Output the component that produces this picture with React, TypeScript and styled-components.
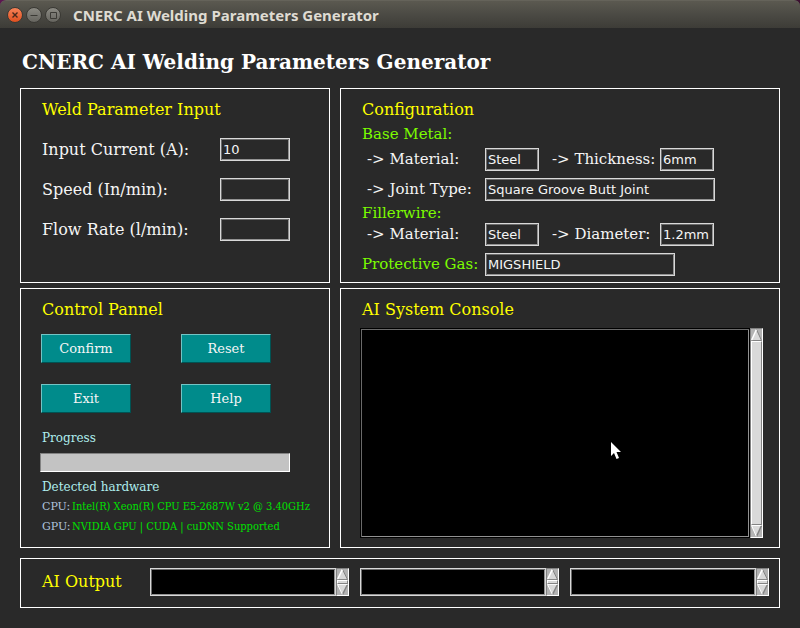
import React from "react";
import styled, { createGlobalStyle, css } from "styled-components";

const serif = `"DejaVu Serif", "Liberation Serif", serif`;
const sans = `"DejaVu Sans", "Liberation Sans", sans-serif`;

const GlobalStyle = createGlobalStyle`
  *, *::before, *::after { box-sizing: border-box; }
  body {
    margin: 0;
    background: #292929;
    color: #f5f5f5;
    font-family: ${serif};
  }
  button, input, textarea { margin: 0; border-radius: 0; outline: none; }
  h1, h2, h3, p { margin: 0; font-weight: normal; }
`;

const Window = styled.div`
  min-height: 100vh;
  background: #292929;
`;

const TitleBar = styled.header`
  display: flex;
  align-items: center;
  gap: 3px;
  height: 28px;
  padding: 0 7px;
  background: linear-gradient(#5b5950, #4b4a44 50%, #3d3c37);
  border-top: 1px solid #65635a;
  border-radius: 6px 6px 0 0;
`;

const Corner = styled.div`
  background: linear-gradient(90deg, #5c1750, #3b1030);
`;

const WindowButton = styled.button<{ $close?: boolean }>`
  display: grid;
  place-items: center;
  width: 16px;
  height: 16px;
  padding: 0;
  border: 1px solid #3a3934;
  border-radius: 50%;
  background: ${(p) =>
    p.$close ? "linear-gradient(#f68358, #e0501f)" : "linear-gradient(#8b8a83, #66655f)"};
`;

const WindowTitle = styled.span`
  margin-left: 9px;
  font: bold 15px/20px "Noto Sans", "Open Sans", sans-serif;
  color: #dfdbd2;
`;

const Main = styled.main`
  display: grid;
  grid-template-columns: 31fr 44fr;
  column-gap: 10px;
  padding: 0 20px 20px;
`;

const PageTitle = styled.h1`
  grid-column: 1 / -1;
  padding: 20px 2px 12px;
  font-size: 20px;
  line-height: 28px;
  font-weight: bold;
  color: #fff;
`;

const Panel = styled.section<{ $gap?: number }>`
  min-width: 0;
  margin-bottom: ${(p) => p.$gap ?? 0}px;
  padding: 11px 10px 6px 21px;
  border: 1px solid #fff;
`;

const PanelTitle = styled.h2`
  font-size: 16px;
  line-height: 20px;
  color: #ff0;
`;

const FieldList = styled.div`
  display: grid;
  gap: 17px;
  padding: 18px 0 34px;
`;

const Field = styled.div`
  display: grid;
  grid-template-columns: 178px 70px;
  align-items: center;
`;

const FieldLabel = styled.label`
  font-size: 16px;
  line-height: 23px;
`;

const entry = css`
  min-width: 0;
  border: 1px solid #d9d9d9;
  box-shadow: inset 1px 1px #6a6a6a, inset -1px -1px #929292;
  color: #f5f5f5;
  font-family: ${sans};
`;

const Entry = styled.input<{ $width: number }>`
  ${entry}
  width: ${(p) => p.$width}px;
  height: 23px;
  padding: 0 2px 1px;
  background: #292929;
  font-size: 13px;
`;

const ConfigBody = styled.div`
  display: flex;
  flex-direction: column;
  padding-top: 4px;
`;

const Subheading = styled.h3`
  font-size: 15px;
  line-height: 20px;
  color: #7cfc00;
`;

const ConfigRow = styled.div<{ $before: number; $after: number }>`
  display: flex;
  align-items: center;
  padding: ${(p) => p.$before}px 0 ${(p) => p.$after}px;
`;

const ConfigLabel = styled.label<{ $kind?: "second" | "top" }>`
  flex: none;
  width: ${(p) => (p.$kind === "second" ? 121 : 123)}px;
  padding-bottom: 2px;
  padding-left: ${(p) => (p.$kind === "second" ? 13 : p.$kind === "top" ? 0 : 5)}px;
  font-size: 15px;
  line-height: 20px;
  white-space: nowrap;
  color: ${(p) => (p.$kind === "top" ? "#7cfc00" : "#f5f5f5")};
`;

const ButtonGrid = styled.div`
  display: grid;
  grid-template-columns: 90px 90px;
  gap: 21px 50px;
  margin: 14px 0 15px -1px;
`;

const ActionButton = styled.button`
  height: 29px;
  padding: 0 0 1px;
  border: 1px solid;
  border-color: #74c4c4 #005353 #005353 #74c4c4;
  background: #008b8b;
  color: #f5f5f5;
  font-family: ${serif};
  font-size: 13px;
`;

const StatusLabel = styled.h3`
  font-size: 12px;
  line-height: 20px;
  color: #afeeee;
`;

const ProgressTrack = styled.div`
  width: 250px;
  height: 19px;
  margin: 5px 0 5px -2px;
  border: 1px solid;
  border-color: #828282 #fff #fff #828282;
  background: #c3c3c3;
`;

const Hardware = styled.dl`
  display: grid;
  grid-template-columns: 30px 1fr;
  margin: 0 -9px 4px 0;
  font-size: 11px;
  line-height: 20px;
  white-space: nowrap;
`;

const HardwareName = styled.dt`
  color: #b0c4de;
`;

const HardwareValue = styled.dd`
  margin: 0;
  font-family: "DejaVu Serif Condensed", ${serif};
  color: #00e000;
`;

const ConsoleArea = styled.div`
  position: relative;
  display: flex;
  height: 210px;
  margin: 8px 6px 0 -2px;
`;

const Output = styled.div`
  display: flex;
  min-width: 0;
  height: 28px;
`;

const TextBox = styled.textarea<{ $console?: boolean }>`
  ${entry}
  flex: 1;
  height: 100%;
  padding: 2px;
  border-color: ${(p) => (p.$console ? "#000" : "#d9d9d9")};
  background: #000;
  font-size: 13px;
  resize: none;
  overflow: hidden;
`;

const OutputPanel = styled(Panel)`
  grid-column: 1 / -1;
  display: grid;
  grid-template-columns: 97px repeat(3, 1fr);
  column-gap: 11px;
  align-items: center;
  padding: 9px 10px 11px 21px;
`;

const Track = styled.div`
  flex: none;
  display: flex;
  flex-direction: column;
  width: 13px;
  border: 1px solid;
  border-color: #828282 #fff #fff #828282;
  background: #b3b3b3;
`;

const Arrow = styled.button`
  display: block;
  flex: 0 1 12px;
  min-height: 0;
  padding: 0;
  border: 0;
  background: none;
  svg { display: block; width: 100%; height: 100%; }
`;

const Thumb = styled.div`
  flex: 1 0 4px;
  border: 1px solid;
  border-color: #fff #828282 #828282 #fff;
  background: #d9d9d9;
`;

const Pointer = styled.svg`
  position: absolute;
  left: 62%;
  top: 113px;
  width: 12px;
  height: 19px;
`;

function ScrollBar() {
  return (
    <Track>
      <Arrow type="button" aria-label="Scroll up">
        <svg viewBox="0 0 11 12" preserveAspectRatio="none">
          <path d="M5.5 .5 10.5 11.5H.5Z" fill="#d9d9d9" />
          <path d="M5.5 .5 10.5 11.5H.5" fill="none" stroke="#828282" />
          <path d="M.7 11 5.3 .7" stroke="#fff" strokeWidth="1.5" />
        </svg>
      </Arrow>
      <Thumb />
      <Arrow type="button" aria-label="Scroll down">
        <svg viewBox="0 0 11 12" preserveAspectRatio="none">
          <path d="M.5 .5H10.5L5.5 11.5Z" fill="#d9d9d9" />
          <path d="M10.5 .5 5.5 11.5" stroke="#828282" strokeWidth="1.5" />
          <path d="M10.5 .5H.5L5.3 11.3" fill="none" stroke="#fff" />
        </svg>
      </Arrow>
    </Track>
  );
}

type EntryProps = { id: string; label: string; value: string; width: number; kind?: "second" | "top" };

function ConfigEntry({ id, label, value, width, kind }: EntryProps) {
  return (
    <>
      <ConfigLabel htmlFor={id} $kind={kind}>{label}</ConfigLabel>
      <Entry id={id} defaultValue={value} $width={width} />
    </>
  );
}

const parameters = [
  { id: "current", label: "Input Current (A):", value: "10" },
  { id: "speed", label: "Speed (In/min):", value: "" },
  { id: "flow", label: "Flow Rate (l/min):", value: "" },
];

export default function App() {
  return (
    <Window>
      <GlobalStyle />
      <Corner>
        <TitleBar>
          <WindowButton type="button" aria-label="Close" $close>
            <svg width="8" height="8" viewBox="0 0 8 8">
              <path d="M1.5 1.5 6.5 6.5M6.5 1.5 1.5 6.5" stroke="#47291c" strokeWidth="1.4" />
            </svg>
          </WindowButton>
          <WindowButton type="button" aria-label="Minimize">
            <svg width="8" height="8" viewBox="0 0 8 8">
              <path d="M.5 4.5H7.5" stroke="#3b3a35" />
            </svg>
          </WindowButton>
          <WindowButton type="button" aria-label="Maximize">
            <svg width="8" height="8" viewBox="0 0 8 8">
              <path d="M1.5 1.5H7.5V7.5H1.5Z" fill="none" stroke="#3b3a35" />
            </svg>
          </WindowButton>
          <WindowTitle>CNERC AI Welding Parameters Generator</WindowTitle>
        </TitleBar>
      </Corner>

      <Main>
        <PageTitle>CNERC AI Welding Parameters Generator</PageTitle>

        <Panel $gap={5}>
          <PanelTitle>Weld Parameter Input</PanelTitle>
          <FieldList>
            {parameters.map((p) => (
              <Field key={p.id}>
                <FieldLabel htmlFor={p.id}>{p.label}</FieldLabel>
                <Entry id={p.id} defaultValue={p.value} $width={70} />
              </Field>
            ))}
          </FieldList>
        </Panel>

        <Panel $gap={5}>
          <PanelTitle>Configuration</PanelTitle>
          <ConfigBody>
            <Subheading>Base Metal:</Subheading>
            <ConfigRow $before={4} $after={7}>
              <ConfigEntry id="base" label="-> Material:" value="Steel" width={54} />
              <ConfigEntry id="thickness" label="-> Thickness:" value="6mm" width={54} kind="second" />
            </ConfigRow>
            <ConfigRow $before={0} $after={2}>
              <ConfigEntry id="joint" label="-> Joint Type:" value="Square Groove Butt Joint" width={230} />
            </ConfigRow>
            <Subheading>Fillerwire:</Subheading>
            <ConfigRow $before={0} $after={7}>
              <ConfigEntry id="filler" label="-> Material:" value="Steel" width={54} />
              <ConfigEntry id="diameter" label="-> Diameter:" value="1.2mm" width={54} kind="second" />
            </ConfigRow>
            <ConfigRow $before={0} $after={0}>
              <ConfigEntry id="gas" label="Protective Gas:" value="MIGSHIELD" width={190} kind="top" />
            </ConfigRow>
          </ConfigBody>
        </Panel>

        <Panel $gap={10}>
          <PanelTitle>Control Pannel</PanelTitle>
          <ButtonGrid>
            {["Confirm", "Reset", "Exit", "Help"].map((name) => (
              <ActionButton type="button" key={name}>{name}</ActionButton>
            ))}
          </ButtonGrid>
          <StatusLabel id="progress">Progress</StatusLabel>
          <ProgressTrack role="progressbar" aria-labelledby="progress" aria-valuenow={0} />
          <StatusLabel>Detected hardware</StatusLabel>
          <Hardware>
            <HardwareName>CPU:</HardwareName>
            <HardwareValue>Intel(R) Xeon(R) CPU E5-2687W v2 @ 3.40GHz</HardwareValue>
            <HardwareName>GPU:</HardwareName>
            <HardwareValue>NVIDIA GPU | CUDA | cuDNN Supported</HardwareValue>
          </Hardware>
        </Panel>

        <Panel $gap={10}>
          <PanelTitle id="console">AI System Console</PanelTitle>
          <ConsoleArea>
            <TextBox $console aria-labelledby="console" />
            <ScrollBar />
            <Pointer viewBox="0 0 12 19">
              <path d="M1 1V15L4 12 6.5 18 9 17 6.5 11H11Z" fill="#fff" />
            </Pointer>
          </ConsoleArea>
        </Panel>

        <OutputPanel>
          <PanelTitle id="output">AI Output</PanelTitle>
          {[1, 2, 3].map((n) => (
            <Output key={n}>
              <TextBox aria-labelledby="output" />
              <ScrollBar />
            </Output>
          ))}
        </OutputPanel>
      </Main>
    </Window>
  );
}
